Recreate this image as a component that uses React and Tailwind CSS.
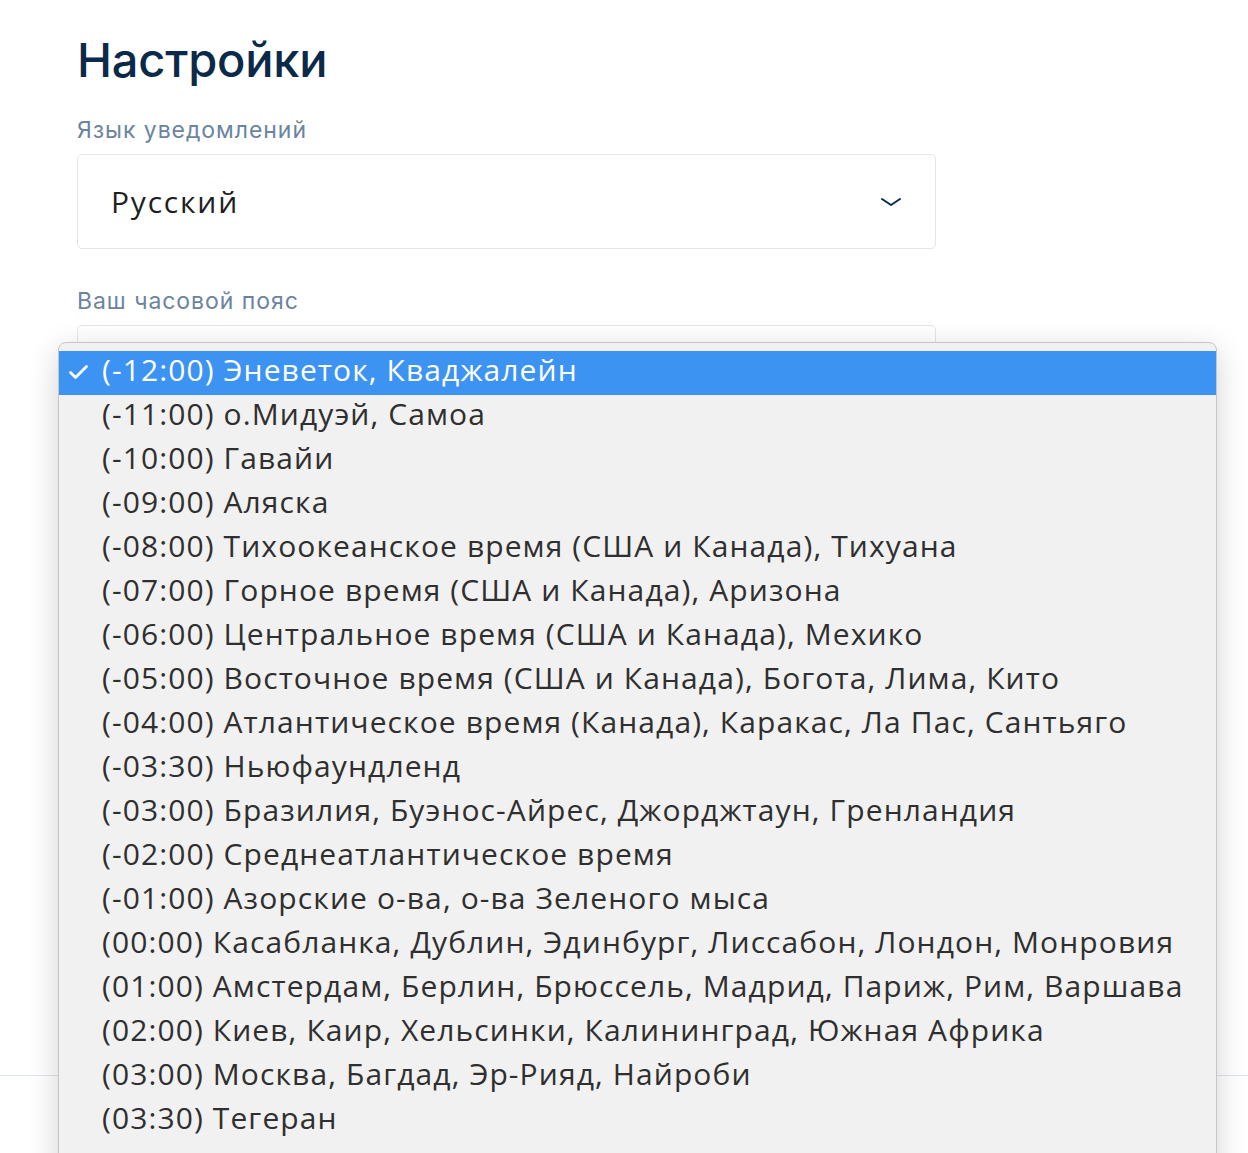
import React from 'react';

const zones = [
  '(-12:00) Эневеток, Кваджалейн',
  '(-11:00) о.Мидуэй, Самоа',
  '(-10:00) Гавайи',
  '(-09:00) Аляска',
  '(-08:00) Тихоокеанское время (США и Канада), Тихуана',
  '(-07:00) Горное время (США и Канада), Аризона',
  '(-06:00) Центральное время (США и Канада), Мехико',
  '(-05:00) Восточное время (США и Канада), Богота, Лима, Кито',
  '(-04:00) Атлантическое время (Канада), Каракас, Ла Пас, Сантьяго',
  '(-03:30) Ньюфаундленд',
  '(-03:00) Бразилия, Буэнос-Айрес, Джорджтаун, Гренландия',
  '(-02:00) Среднеатлантическое время',
  '(-01:00) Азорские о-ва, о-ва Зеленого мыса',
  '(00:00) Касабланка, Дублин, Эдинбург, Лиссабон, Лондон, Монровия',
  '(01:00) Амстердам, Берлин, Брюссель, Мадрид, Париж, Рим, Варшава',
  '(02:00) Киев, Каир, Хельсинки, Калининград, Южная Африка',
  '(03:00) Москва, Багдад, Эр-Рияд, Найроби',
  '(03:30) Тегеран',
];

function Chevron() {
  return (
    <svg width="22" height="12" viewBox="0 0 22 12" fill="none">
      <path d="M2 3 L11 9 L20 3" stroke="#0b2a4a" strokeWidth="2" strokeLinecap="round" strokeLinejoin="round" />
    </svg>
  );
}

export default function App() {
  return (
    <div className="relative h-[1153px] w-[1248px] overflow-hidden bg-white font-['Inter',sans-serif]">
      <div className="pl-[77px] pt-[30px] w-[936px]">
        <h1 className="text-[47px] leading-[60px] font-medium text-[#0b2a4a] tracking-[-0.2px]">Настройки</h1>
        <div className="mt-[26px] text-[23px] leading-[28px] tracking-[0.95px] text-[#6b84a0]">Язык уведомлений</div>
        <div className="mt-[10px] h-[95px] rounded-[5px] border border-[#e1e6eb] flex items-center justify-between pl-[33px] pr-[33px]">
          <span className="text-[30px] text-[#1f1f1f] tracking-[1.8px] font-['Open_Sans',sans-serif]">Русский</span>
          <Chevron />
        </div>
        <div className="mt-[38px] text-[23px] leading-[28px] tracking-[0.95px] text-[#6b84a0]">Ваш часовой пояс</div>
        <div className="mt-[10px] h-[95px] rounded-[5px] border border-[#e1e6eb]" />
      </div>
      <div className="absolute left-0 right-0 top-[1075px] h-px bg-[#dde3ea]" />

      <div className="absolute left-[58px] top-[342px] w-[1159px] h-[900px] rounded-t-[8px] border border-[#c6c6c6] bg-[#f1f1f1] pt-[8px] shadow-[0_8px_30px_rgba(0,0,0,0.18)]">
        {zones.map((z, i) => (
          <div
            key={z}
            className={
              i === 0
                ? 'relative h-[44px] flex items-center pb-[7px] bg-[#3d93f2] text-white pl-[43px]'
                : 'h-[44px] flex items-center pb-[7px] text-[#2f2f2f] pl-[43px]'
            }
          >
            {i === 0 && (
              <svg className="absolute left-[9px] top-[13px]" width="21" height="16" viewBox="0 0 21 16" fill="none">
                <path d="M2.5 8.5 L7.5 13.5 L18.5 2.5" stroke="white" strokeWidth="2.8" strokeLinecap="round" strokeLinejoin="round" />
              </svg>
            )}
            <span className="text-[30px] leading-none tracking-[1.1px] font-['Open_Sans',sans-serif]">{z}</span>
          </div>
        ))}
      </div>
    </div>
  );
}
